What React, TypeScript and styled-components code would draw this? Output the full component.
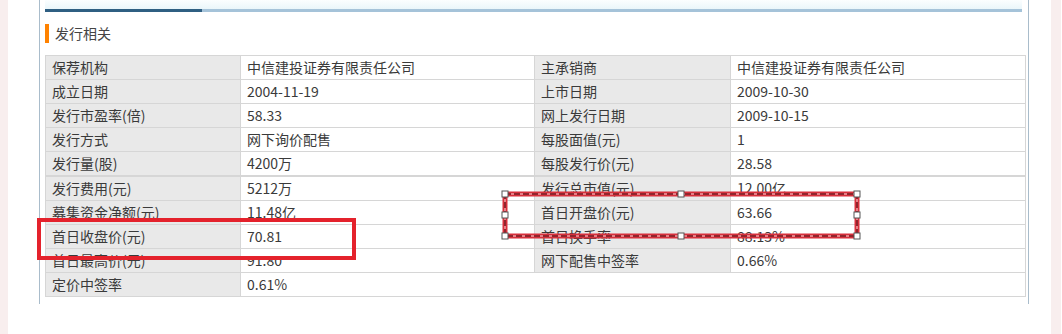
import styled, { createGlobalStyle } from 'styled-components';

const GlobalStyle = createGlobalStyle`
    html, body {
        margin: 0;
        padding: 0;
        background: #ffffff;
    }
    body {
        font-family: "Noto Sans CJK SC", "Noto Sans", sans-serif;
        font-size: 14px;
        color: #333;
    }
`;

const Page = styled.div`
    position: relative;
    display: flex;
    width: 1062px;
    height: 334px;
    overflow: hidden;
`;

const SideStrip = styled.div<{ $width: number }>`
    width: ${(p) => p.$width}px;
    flex: none;
    background: #f8eeee;
`;

const Gutter = styled.div<{ $width: number }>`
    width: ${(p) => p.$width}px;
    flex: none;
`;

const Panel = styled.div`
    width: 990px;
    height: 304px;
    flex: none;
    border-left: 1px solid #a9bccb;
    border-right: 1px solid #a9bccb;
    padding: 0 5px;
    box-sizing: border-box;
`;

const TabBar = styled.div`
    height: 9px;
    margin-right: 1px;
    background: linear-gradient(to bottom, #fbfeff, #eaf6fa);
`;

const TabLine = styled.div`
    display: flex;
    height: 3px;
    margin-right: 1px;
`;

const TabActive = styled.div`
    width: 157px;
    background: #2f5f82;
`;

const TabRest = styled.div`
    flex: 1;
    background: #a5c3d9;
`;

const Title = styled.div`
    display: flex;
    align-items: center;
    gap: 6px;
    height: 19px;
    margin: 12px 0 12px;
    color: #444;
    font-size: 14px;
    line-height: 19px;
`;

const TitleMark = styled.span`
    width: 4px;
    height: 19px;
    background: #ff8200;
`;

const Table = styled.table`
    width: 980px;
    border-collapse: collapse;
    table-layout: fixed;
    border: 1px solid #d6d6d6;
`;

const Cell = styled.td<{ $label?: boolean }>`
    height: 23px;
    padding: 0 0 0 6px;
    border: 1px solid #d6d6d6;
    background: ${(p) => (p.$label ? '#e9e9e9' : '#ffffff')};
    color: #3a3a3a;
    font-size: 14px;
    line-height: 23px;
    white-space: nowrap;
    overflow: hidden;
`;

const MarkBox = styled.div`
    position: absolute;
    left: 37px;
    top: 218px;
    width: 319px;
    height: 42px;
    border: 4px solid #e4222c;
    box-sizing: border-box;
`;

const Selection = styled.svg`
    position: absolute;
    left: 499px;
    top: 188px;
    overflow: visible;
`;

type Row = [string, string, string?, string?];

const issueRows: Row[] = [
    ['保荐机构', '中信建投证券有限责任公司', '主承销商', '中信建投证券有限责任公司'],
    ['成立日期', '2004-11-19', '上市日期', '2009-10-30'],
    ['发行市盈率(倍)', '58.33', '网上发行日期', '2009-10-15'],
    ['发行方式', '网下询价配售', '每股面值(元)', '1'],
    ['发行量(股)', '4200万', '每股发行价(元)', '28.58'],
];

const marketRows: Row[] = [
    ['发行费用(元)', '5212万', '发行总市值(元)', '12.00亿'],
    ['募集资金净额(元)', '11.48亿', '首日开盘价(元)', '63.66'],
    ['首日收盘价(元)', '70.81', '首日换手率', '88.13%'],
    ['首日最高价(元)', '91.80', '网下配售中签率', '0.66%'],
    ['定价中签率', '0.61%'],
];

const renderRows = (rows: Row[]) =>
    rows.map(([l1, v1, l2, v2]) => (
        <tr key={l1}>
            <Cell $label>{l1}</Cell>
            {l2 ? (
                <>
                    <Cell>{v1}</Cell>
                    <Cell $label>{l2}</Cell>
                    <Cell>{v2}</Cell>
                </>
            ) : (
                <Cell colSpan={3}>{v1}</Cell>
            )}
        </tr>
    ));

const ColGroup = () => (
    <colgroup>
        <col style={{ width: 195 }} />
        <col style={{ width: 294 }} />
        <col style={{ width: 196 }} />
        <col style={{ width: 295 }} />
    </colgroup>
);

// selection frame with resize handles, 352 x 42
const SelectionFrame = () => {
    const w = 352;
    const h = 42;
    const handles = [
        [0, 0], [w / 2, 0], [w, 0],
        [0, h / 2], [w, h / 2],
        [0, h], [w / 2, h], [w, h],
    ];
    return (
        <Selection width={w + 12} height={h + 12} viewBox={`-6 -6 ${w + 12} ${h + 12}`}>
            <rect x={0} y={0} width={w} height={h} fill="none" stroke="#d8303c" strokeWidth={5} />
            <rect x={0} y={0} width={w} height={h} fill="none" stroke="#4a1c20" strokeWidth={1} strokeDasharray="6 3" />
            <rect x={0} y={0} width={w} height={h} fill="none" stroke="#f4d0d2" strokeWidth={1} strokeDasharray="3 6" strokeDashoffset={-6} />
            {handles.map(([x, y], i) => (
                <rect key={i} x={x - 3} y={y - 3} width={6} height={6} fill="#ffffff" stroke="#555" strokeWidth={1} />
            ))}
        </Selection>
    );
};

const App = () => (
    <>
        <GlobalStyle />
        <Page>
            <SideStrip $width={8} />
            <Gutter $width={31} />
            <Panel>
                <TabBar />
                <TabLine>
                    <TabActive />
                    <TabRest />
                </TabLine>
                <Title>
                    <TitleMark />
                    发行相关
                </Title>
                <Table>
                    <ColGroup />
                    <tbody>{renderRows(issueRows)}</tbody>
                </Table>
                <Table>
                    <ColGroup />
                    <tbody>{renderRows(marketRows)}</tbody>
                </Table>
            </Panel>
            <Gutter $width={22} />
            <SideStrip $width={10} />
            <MarkBox />
            <SelectionFrame />
        </Page>
    </>
);

export default App;
